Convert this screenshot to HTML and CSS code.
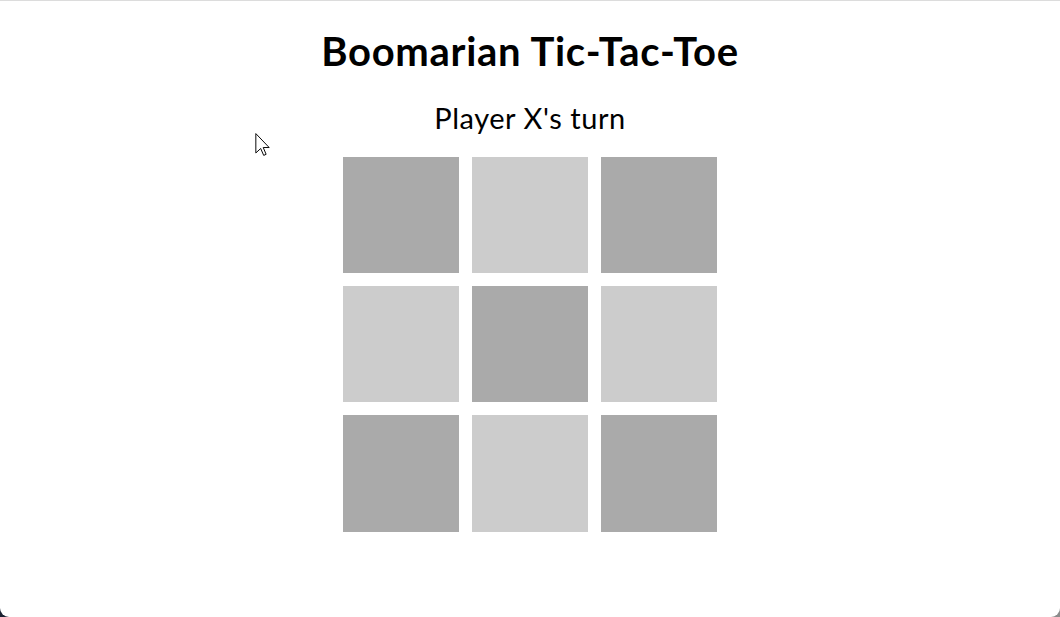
FILE: index.html
```html
<!DOCTYPE html>
<html lang="en">
<head>
<meta charset="utf-8">
<title>Boomarian Tic-Tac-Toe</title>
<link rel="stylesheet" href="styles.css">
</head>
<body>
<div class="app">
  <h1 class="title">Boomarian Tic-Tac-Toe</h1>
  <div class="status">Player X's turn</div>
  <div class="board">
    <div class="cell dark"></div>
    <div class="cell light"></div>
    <div class="cell dark"></div>
    <div class="cell light"></div>
    <div class="cell dark"></div>
    <div class="cell light"></div>
    <div class="cell dark"></div>
    <div class="cell light"></div>
    <div class="cell dark"></div>
  </div>
</div>
<svg class="cursor" width="15" height="23" viewBox="0 0 12 19" aria-hidden="true">
  <path d="M0.5 0.5 V16.5 L4.5 12.8 L7 18.5 L9 17.6 L6.6 12 H11.5 Z" fill="#fff" stroke="#000" stroke-width="0.8" stroke-linejoin="miter"/>
</svg>
</body>
</html>
```
FILE: styles.css
```css
html {
  height: 100%;
  background: linear-gradient(90deg, #1b2232 0%, #5a5f68 50%, #8c8c8c 100%);
}
body {
  margin: 0;
  min-height: 100%;
  box-sizing: border-box;
  background: #fff;
  border-top: 1px solid #dcdcdc;
  border-radius: 0 0 9px 9px;
  font-family: Lato, "Open Sans", sans-serif;
  color: #000;
  position: relative;
}
.app {
  display: flex;
  flex-direction: column;
  align-items: center;
  padding-top: 26px;
}
.title {
  margin: 0 0 26px;
  font-size: 40px;
  font-weight: 700;
  line-height: 1.2;
  letter-spacing: 0.7px;
}
.status {
  font-size: 29px;
  line-height: 1.2;
  letter-spacing: 0.55px;
  margin-bottom: 21px;
}
.board {
  display: grid;
  grid-template-columns: repeat(3, 116px);
  grid-template-rows: repeat(3, 116.3px);
  column-gap: 13px;
  row-gap: 13px;
}
.cell.dark { background: #aaaaaa; }
.cell.light { background: #cccccc; }
.cursor {
  position: absolute;
  left: 255px;
  top: 132px;
}
```
